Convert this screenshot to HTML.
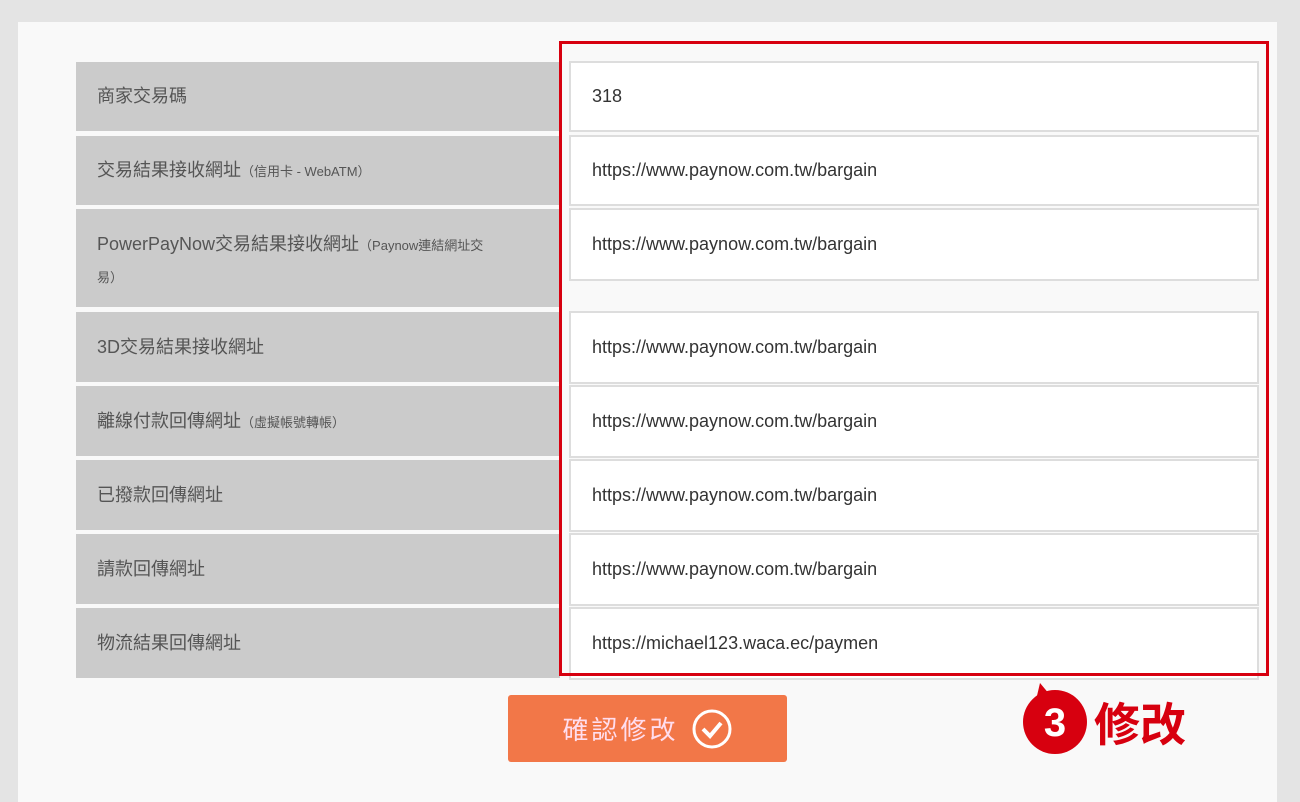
<!DOCTYPE html>
<html><head><meta charset="utf-8"><style>
body{margin:0;width:1300px;height:794px;background:#e4e4e4;position:relative;overflow:hidden;font-family:"Liberation Sans","Noto Sans CJK TC",sans-serif;}
.panel{position:absolute;left:18px;top:22px;width:1259px;height:780px;background:#f9f9f9;}
.lab{position:absolute;left:76px;width:484px;background:#cbcbcb;color:#555;font-size:18px;box-sizing:border-box;padding-left:21px;}
.lab small{font-size:13px;}
.inp{position:absolute;left:569px;width:690px;background:#fff;border:2px solid #ddd;box-sizing:border-box;color:#333;font-size:18px;padding-left:21px;}
.red{position:absolute;left:559px;top:41px;width:710px;height:635px;border:3px solid #d7000f;box-sizing:border-box;}
.btn{position:absolute;left:508px;top:695px;width:279px;height:67px;background:#f27748;border-radius:3px;color:#fde;font-size:26px;letter-spacing:3px;display:flex;align-items:center;justify-content:center;}
</style></head><body>
<div class="panel"></div>
<div class="lab" style="top:62px;height:69px;line-height:69px">商家交易碼</div>
<div class="lab" style="top:136px;height:69px;line-height:69px">交易結果接收網址<small>（信用卡 - WebATM）</small></div>
<div class="lab" style="top:209px;height:98px;padding-top:20px;line-height:30px">PowerPayNow交易結果接收網址<small>（Paynow連結網址交<br>易）</small></div>
<div class="lab" style="top:312px;height:70px;line-height:70px">3D交易結果接收網址</div>
<div class="lab" style="top:386px;height:70px;line-height:70px">離線付款回傳網址<small>（虛擬帳號轉帳）</small></div>
<div class="lab" style="top:460px;height:70px;line-height:70px">已撥款回傳網址</div>
<div class="lab" style="top:534px;height:70px;line-height:70px">請款回傳網址</div>
<div class="lab" style="top:608px;height:70px;line-height:70px">物流結果回傳網址</div>
<div class="inp" style="top:61px;height:71px;line-height:67px">318</div>
<div class="inp" style="top:135px;height:71px;line-height:67px">https://www.paynow.com.tw/bargain</div>
<div class="inp" style="top:208px;height:73px;line-height:69px">https://www.paynow.com.tw/bargain</div>
<div class="inp" style="top:311px;height:73px;line-height:69px">https://www.paynow.com.tw/bargain</div>
<div class="inp" style="top:385px;height:73px;line-height:69px">https://www.paynow.com.tw/bargain</div>
<div class="inp" style="top:459px;height:73px;line-height:69px">https://www.paynow.com.tw/bargain</div>
<div class="inp" style="top:533px;height:73px;line-height:69px">https://www.paynow.com.tw/bargain</div>
<div class="inp" style="top:607px;height:73px;line-height:69px">https://michael123.waca.ec/paymen</div>
<div class="red"></div>
<div class="btn">確認修改<svg width="42" height="42" viewBox="0 0 42 42" style="margin-left:12px"><circle cx="21" cy="21" r="18" fill="none" stroke="#fff" stroke-width="3"/><path d="M12 21l7 7 11-13" fill="none" stroke="#fff" stroke-width="4"/></svg></div>
<svg style="position:absolute;left:1018px;top:680px" width="76" height="80"><path d="M22 3L32 15L18 20Z" fill="#d7000f"/><circle cx="37" cy="42" r="32" fill="#d7000f"/><text x="37" y="56" font-family="Liberation Sans" font-weight="bold" font-size="40" fill="#fff" text-anchor="middle">3</text></svg>
<div style="position:absolute;left:1094px;top:694px;font-size:46px;font-weight:bold;color:#d7000f;font-family:'Noto Sans CJK TC',sans-serif;line-height:56px">修改</div>
</body></html>
